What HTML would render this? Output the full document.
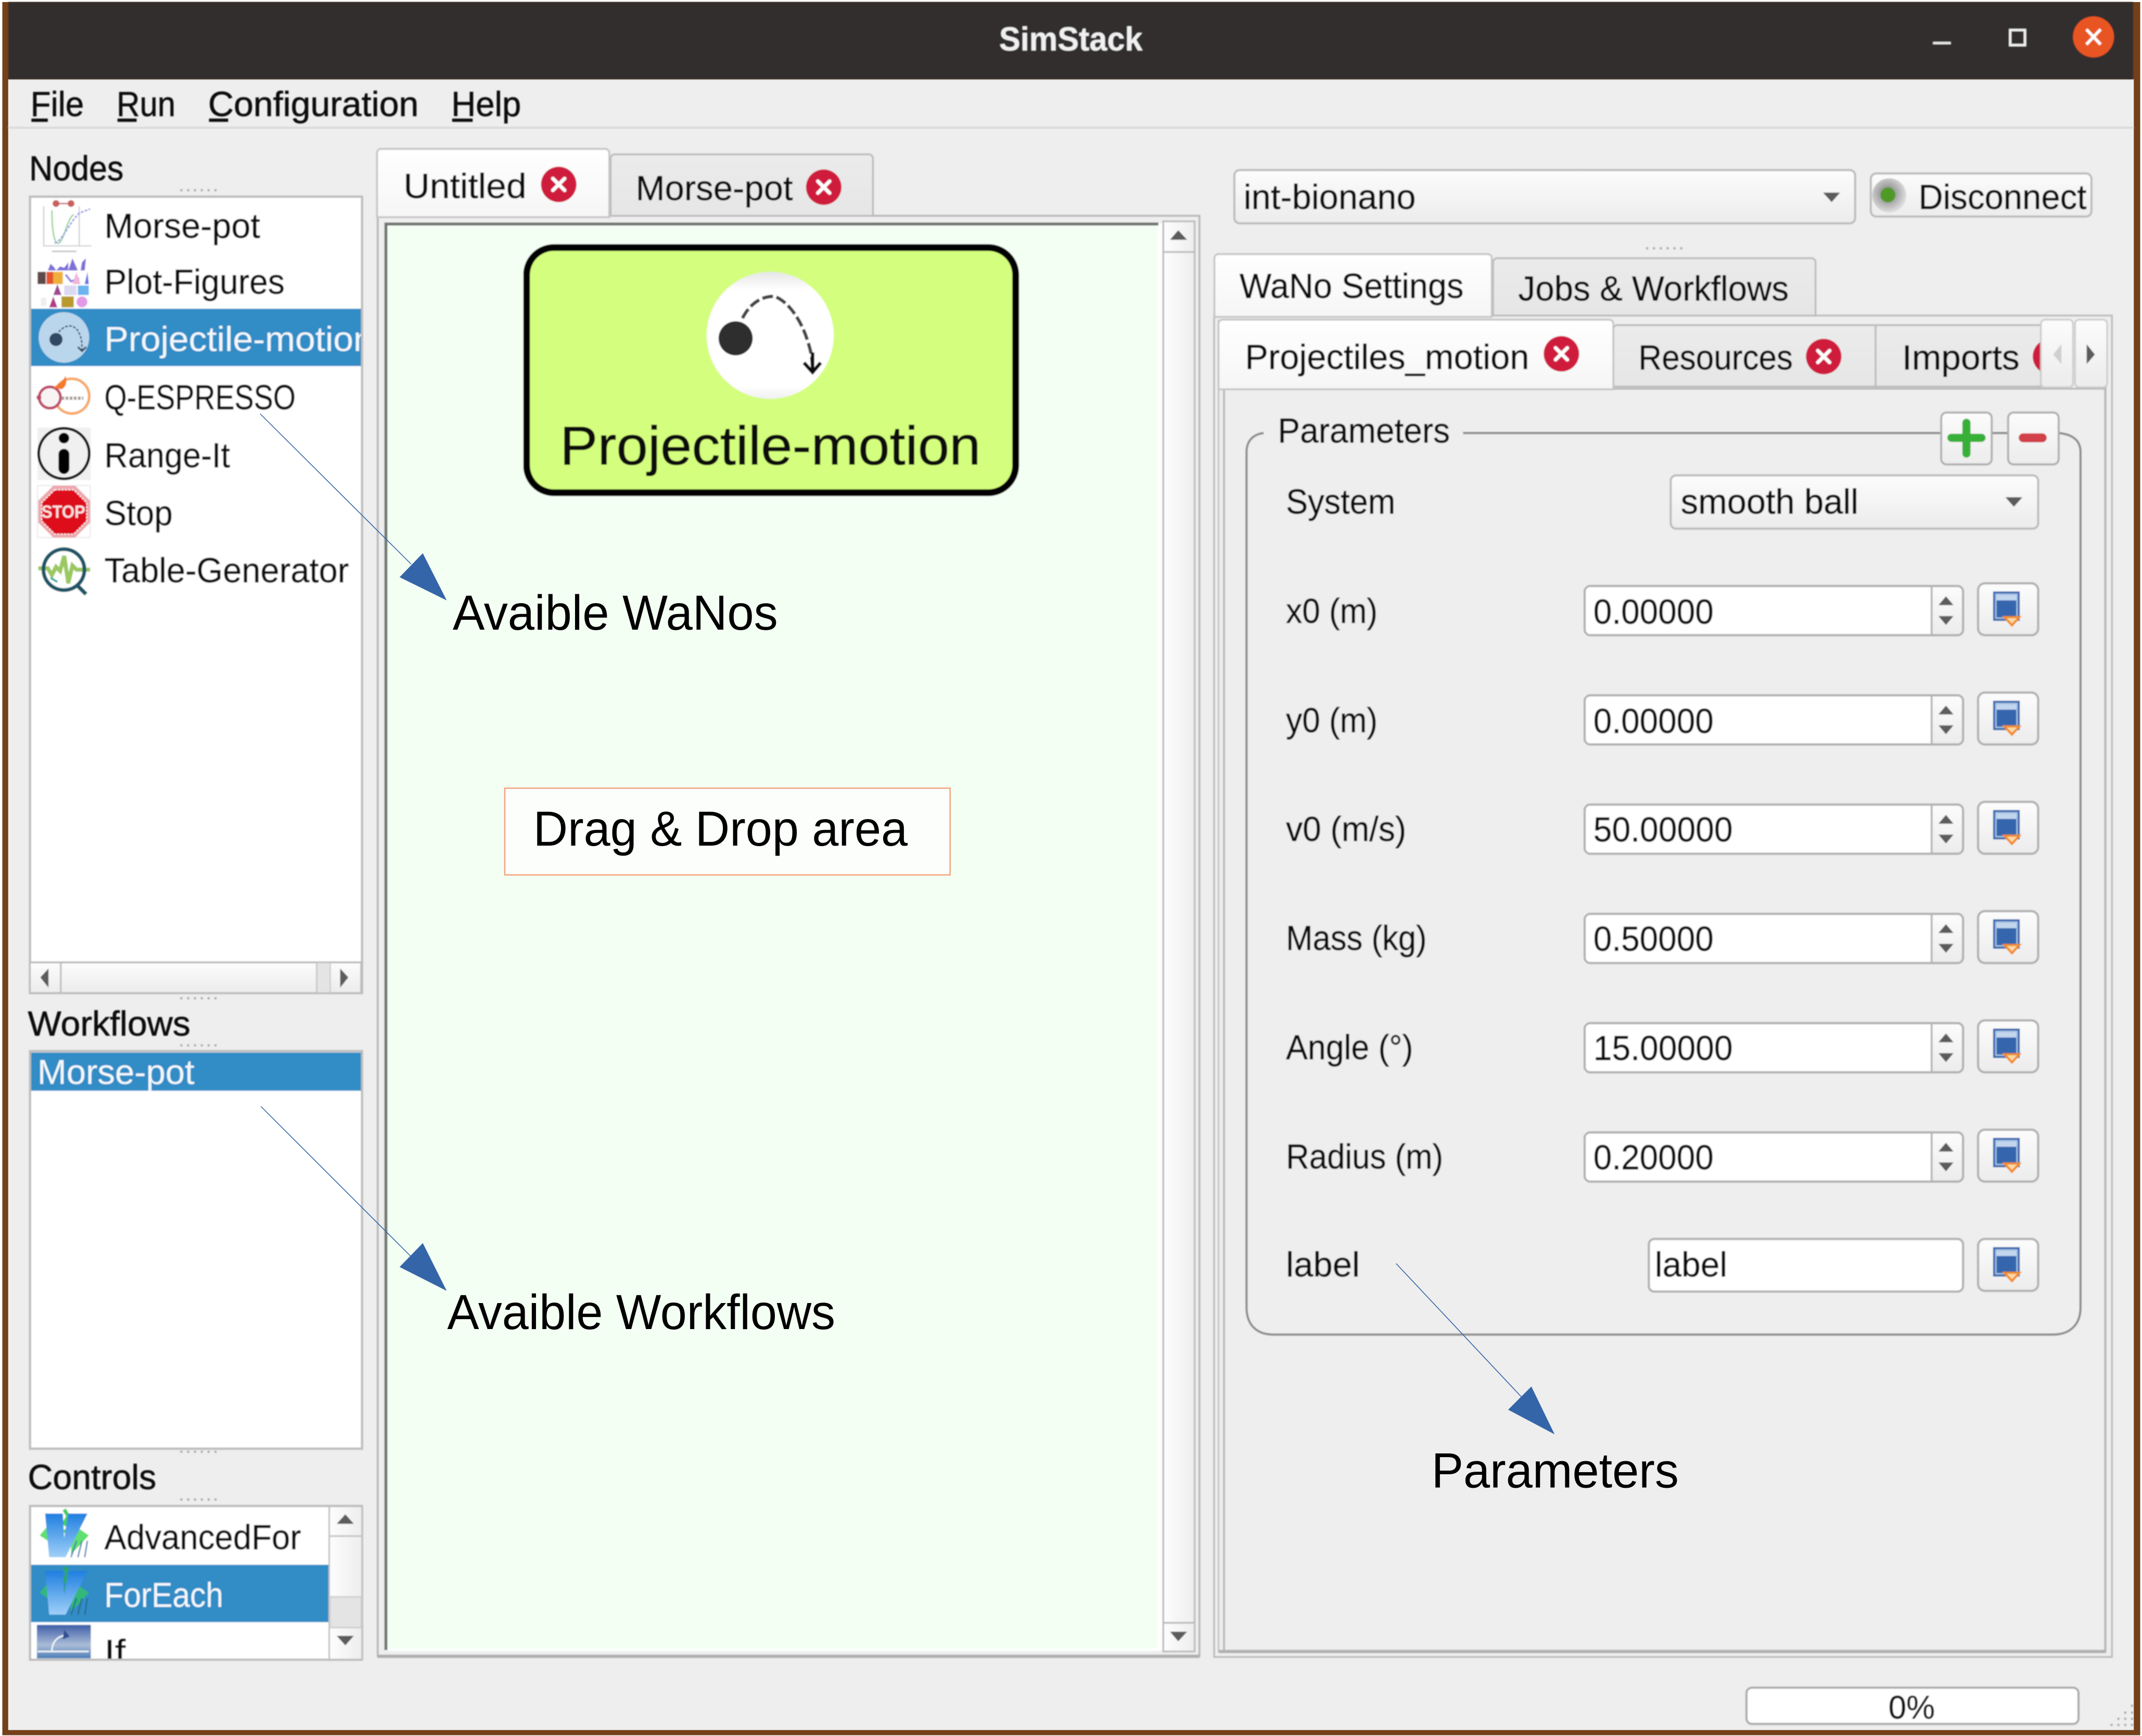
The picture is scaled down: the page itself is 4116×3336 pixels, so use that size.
<!DOCTYPE html>
<html><head><meta charset="utf-8"><title>SimStack</title>
<style>
html,body{margin:0;padding:0;background:#fff;width:4116px;height:3336px;overflow:hidden}
svg{display:block}
text{font-family:"Liberation Sans",sans-serif;fill:#0a0a0a;font-size:25.5px;stroke:#0a0a0a;stroke-width:.28px;transform:translateX(-.6px)}
.w{fill:#f2f7fb;stroke:none}
.a{font-size:36px;fill:#000;stroke:none}
</style></head><body>
<svg xmlns="http://www.w3.org/2000/svg" width="4116" height="3336" viewBox="0 0 1568 1270.857">
<defs>
<filter id="soft" filterUnits="userSpaceOnUse" x="0" y="0" width="1568" height="1271"><feGaussianBlur stdDeviation="0.45"/></filter>
<linearGradient id="btn" x1="0" y1="0" x2="0" y2="1"><stop offset="0" stop-color="#fcfcfc"/><stop offset="1" stop-color="#ececec"/></linearGradient>
<linearGradient id="hb" x1="0" y1="0" x2="1" y2="0"><stop offset="0" stop-color="#fdfdfd"/><stop offset="1" stop-color="#eeeeee"/></linearGradient>
<linearGradient id="ta" x1="0" y1="0" x2="0" y2="1"><stop offset="0" stop-color="#ffffff"/><stop offset="1" stop-color="#f6f6f6"/></linearGradient>
<linearGradient id="ti" x1="0" y1="0" x2="0" y2="1"><stop offset="0" stop-color="#ebebeb"/><stop offset="1" stop-color="#e6e6e6"/></linearGradient>
<linearGradient id="vi" x1="0" y1="0" x2="0" y2="1"><stop offset="0" stop-color="#1f7fe0"/><stop offset="1" stop-color="#9fd0f8"/></linearGradient>
<linearGradient id="ifg" x1="0" y1="0" x2="0" y2="1"><stop offset="0" stop-color="#3f5ea8"/><stop offset=".6" stop-color="#a9bcd6"/><stop offset="1" stop-color="#4f7fb8"/></linearGradient>
<linearGradient id="ballg" x1="0" y1="0" x2="0" y2="1"><stop offset="0" stop-color="#e6e6e6"/><stop offset=".14" stop-color="#ffffff"/><stop offset=".9" stop-color="#ffffff"/><stop offset="1" stop-color="#f0f0f0"/></linearGradient>
<radialGradient id="led" cx=".45" cy=".45" r=".55"><stop offset=".35" stop-color="#9a9a9a"/><stop offset="1" stop-color="#dedede"/></radialGradient>
<symbol id="xc" overflow="visible"><circle cx="0" cy="0" r="13" fill="#cf1a3c"/><path d="M-4.300-4.300 4.300 4.300M4.300-4.300-4.300 4.300" stroke="#fff" stroke-width="2.600" stroke-linecap="round"/></symbol>
<symbol id="spinb" overflow="visible">
<path d="M254 0H273a4 4 0 0 1 4 4V32a4 4 0 0 1-4 4H254Z" fill="url(#btn)"/>
<rect x="0" y="0" width="277" height="36" rx="4" fill="none" stroke="#b0b0b0" stroke-width="1.600"/>
<path d="M254 0V36" stroke="#b4b4b4" stroke-width="1.400"/>
<path d="M264.500 7.500 270 14H259ZM259 22H270L264.500 28.500Z" fill="#5c5c5c"/>
</symbol>
<symbol id="fbtn" overflow="visible">
<rect x="0" y="0" width="44" height="38" rx="5" fill="url(#btn)" stroke="#b0b0b0" stroke-width="1.600"/>
<rect x="11" y="6" width="19.500" height="21.500" fill="#3566ad"/>
<rect x="13" y="8" width="15.500" height="17.500" fill="none" stroke="#a9c4e4" stroke-width="1"/>
<rect x="13.500" y="8.500" width="14.500" height="4" fill="#c2d6ee"/>
<path d="M17.500 24H32L24.800 32Z" fill="#f28a1e"/><path d="M21 25.500H28.500L24.800 29.500Z" fill="#fbd9a8"/>
</symbol>
</defs>

<rect width="1568" height="1271" fill="#fff"/>
<rect x="1.700" y="1.500" width="1565" height="1268.800" fill="#74401a"/>
<rect x="6" y="58" width="1556" height="1208.500" fill="#eeeeee"/>

<g filter="url(#soft)">
<!-- title bar -->
<rect x="6" y="1.500" width="1555.500" height="56.500" fill="#302e2e"/>
<text x="732" y="37" font-weight="bold" textLength="105" lengthAdjust="spacingAndGlyphs" style="fill:#f0f0f0;stroke:none;font-size:24.500px">SimStack</text>
<path d="M1415 31.500H1428" stroke="#e6e6e6" stroke-width="1.800"/>
<rect x="1471.500" y="22" width="10.800" height="11" fill="none" stroke="#f0f0f0" stroke-width="1.800"/>
<circle cx="1532.500" cy="27" r="15" fill="#e95420"/>
<path d="M1527.300 21.500 1537.700 32.500M1537.700 21.500 1527.300 32.500" stroke="#fff" stroke-width="2.200"/>

<!-- menu -->
<text x="23" y="85" textLength="39" lengthAdjust="spacingAndGlyphs">File</text>
<text x="86" y="85" textLength="43" lengthAdjust="spacingAndGlyphs">Run</text>
<text x="153" y="85" textLength="154" lengthAdjust="spacingAndGlyphs">Configuration</text>
<text x="331" y="85" textLength="51" lengthAdjust="spacingAndGlyphs">Help</text>
<path d="M23 88H35M86 88H100M153 88H167M331 88H346" stroke="#111" stroke-width="2.400"/>
<path d="M6 93.500H1562" stroke="#d6d6d6" stroke-width="1.200"/>

<!-- grips -->
<g fill="#a8a8a8">
<path d="M132 138.500h1.500v1.500h-1.500zM137 138.500h1.500v1.500h-1.500zM142 138.500h1.500v1.500h-1.500zM147 138.500h1.500v1.500h-1.500zM152 138.500h1.500v1.500h-1.500zM157 138.500h1.500v1.500h-1.500z"/>
<path d="M132 730h1.500v1.500h-1.500zM137 730h1.500v1.500h-1.500zM142 730h1.500v1.500h-1.500zM147 730h1.500v1.500h-1.500zM152 730h1.500v1.500h-1.500zM157 730h1.500v1.500h-1.500z"/>
<path d="M132 764.500h1.500v1.500h-1.500zM137 764.500h1.500v1.500h-1.500zM142 764.500h1.500v1.500h-1.500zM147 764.500h1.500v1.500h-1.500zM152 764.500h1.500v1.500h-1.500zM157 764.500h1.500v1.500h-1.500z"/>
<path d="M132 1062h1.500v1.500h-1.500zM137 1062h1.500v1.500h-1.500zM142 1062h1.500v1.500h-1.500zM147 1062h1.500v1.500h-1.500zM152 1062h1.500v1.500h-1.500zM157 1062h1.500v1.500h-1.500z"/>
<path d="M132 1097h1.500v1.500h-1.500zM137 1097h1.500v1.500h-1.500zM142 1097h1.500v1.500h-1.500zM147 1097h1.500v1.500h-1.500zM152 1097h1.500v1.500h-1.500zM157 1097h1.500v1.500h-1.500z"/>
<path d="M1205 181h1.500v1.500h-1.500zM1210 181h1.500v1.500h-1.500zM1215 181h1.500v1.500h-1.500zM1220 181h1.500v1.500h-1.500zM1225 181h1.500v1.500h-1.500zM1230 181h1.500v1.500h-1.500z"/>
<path d="M1560 1248h1.500v1.500h-1.500zM1555 1253h1.500v1.500h-1.500zM1560 1253h1.500v1.500h-1.500zM1550 1257.500h1.500v1.500h-1.500zM1555 1257.500h1.500v1.500h-1.500zM1560 1257.500h1.500v1.500h-1.500zM1545 1262h1.500v1.500h-1.500zM1550 1262h1.500v1.500h-1.500zM1555 1262h1.500v1.500h-1.500zM1560 1262h1.500v1.500h-1.500z"/>
</g>

<!-- Nodes -->
<text x="22" y="132" textLength="69" lengthAdjust="spacingAndGlyphs">Nodes</text>
<rect x="22" y="144" width="243" height="583" fill="#fff" stroke="#bcbcbc" stroke-width="1.600"/>
<rect x="22.800" y="226" width="241.400" height="42" fill="#308cc6"/>
<text x="77" y="174" textLength="114" lengthAdjust="spacingAndGlyphs">Morse-pot</text>
<text x="77" y="215" textLength="132" lengthAdjust="spacingAndGlyphs">Plot-Figures</text>
<svg x="22.800" y="226" width="241.400" height="42" viewBox="22.800 226 241.400 42"><text x="77" y="257" textLength="197" lengthAdjust="spacingAndGlyphs" class="w">Projectile-motion</text></svg>
<text x="77" y="299.700" textLength="140" lengthAdjust="spacingAndGlyphs">Q-ESPRESSO</text>
<text x="77" y="342" textLength="92" lengthAdjust="spacingAndGlyphs">Range-It</text>
<text x="77" y="384.300" textLength="50" lengthAdjust="spacingAndGlyphs">Stop</text>
<text x="77" y="426.300" textLength="179" lengthAdjust="spacingAndGlyphs">Table-Generator</text>

<!-- morse icon -->
<path d="M32 151V180H67M58 151V180" fill="none" stroke="#c8c8c8" stroke-width=".8"/>
<circle cx="41" cy="149" r="2.500" fill="#c96060"/><circle cx="52" cy="149" r="2.500" fill="#c96060"/><path d="M41 149H52" stroke="#c96060"/>
<path d="M38 154C38 170 40 179 43 178C47 176 49 160 54 157" fill="none" stroke="#8fd08f" stroke-width="1"/>
<path d="M40 178C46 176 50 164 58 156L66 153" fill="none" stroke="#9a9ae8" stroke-width="1.200" stroke-dasharray="2 1"/>
<path d="M38 184H56" stroke="#bbb" stroke-width="1"/>

<!-- plot icon -->
<g>
<rect x="27.500" y="187" width="39" height="38" fill="#fff"/>
<path d="M35 198 37 193 40 196 41 198ZM41 198 44 195 47 196 50 192 50 198ZM50 198 53 189 57 198ZM59 198 60 192 63 189 62 198Z" fill="#7f70d8"/>
<rect x="27.500" y="199" width="6" height="9" fill="#5e4a4a"/><rect x="34" y="199" width="5" height="9" fill="#e6532e"/><rect x="39" y="199" width="7" height="9" fill="#efb03a"/>
<path d="M48 201 52 206 58 204" fill="none" stroke="#8e80e0" stroke-width="1.500"/><path d="M53 208 56 199 59 208Z" fill="#f2b6d8"/><path d="M62 208 64 199 65 208Z" fill="#6670e8"/>
<path d="M39 216 42 208 45 216Z" fill="#a04a92"/><rect x="47" y="209" width="9" height="7" fill="#dcd8f2"/><rect x="57" y="209" width="8" height="7" fill="#6cb4ef"/>
<path d="M36 225 39 217 42 225Z" fill="#b23a86"/><rect x="45" y="217" width="9" height="8" fill="#b89a2e"/><circle cx="60" cy="221" r="4" fill="#e29ae6"/><rect x="30" y="218" width="4" height="6" fill="#eee"/>
</g>

<!-- projectile small -->
<circle cx="46.800" cy="247" r="18.500" fill="#bad6ec"/>
<circle cx="41" cy="248.500" r="4.800" fill="#314a64"/>
<path d="M43 243C48 237 55 237 58 244C60 248 60 252 60 256" fill="none" stroke="#2e465e" stroke-width="1" stroke-dasharray="2 1"/>
<path d="M57 254 60 257 63 254" fill="none" stroke="#2e465e" stroke-width="1.300"/>

<!-- QE -->
<circle cx="52.600" cy="290" r="12.700" fill="#fff" stroke="#f8a868" stroke-width="2"/>
<circle cx="36.500" cy="291" r="7.800" fill="#f8f4f4" stroke="#c04868" stroke-width="2"/>
<path d="M39 284 C42 281 46 280 48 275 C49 279 49 283 45 285Z" fill="#f47a2a"/>
<path d="M45 291.500H61" stroke="#a89c98" stroke-width="2.400" stroke-dasharray="2 1"/>
<circle cx="28.500" cy="291" r="1.800" fill="#c04868"/>

<!-- info -->
<rect x="27.500" y="313" width="39" height="38.500" fill="#f0f0f0"/>
<circle cx="46.800" cy="332" r="18.500" fill="none" stroke="#111" stroke-width="2"/>
<circle cx="46.800" cy="320.700" r="3.900" fill="#000"/>
<rect x="42.800" y="328.500" width="8" height="18.500" rx="4" fill="#000"/>

<!-- stop -->
<rect x="27.500" y="355.500" width="38.500" height="38" fill="#fff" stroke="#e2e2e2" stroke-width=".6"/>
<path d="M39 355.500H55L66 366.500V382.500L55 393.500H39L28 382.500V366.500Z" fill="#eda8ae"/>
<path d="M40 358.500H54L63.500 368V381.500L54 391H40L30.500 381.500V368Z" fill="#dd0a1e" stroke="#fff" stroke-width=".8" stroke-dasharray="1.500 1"/>
<text x="31" y="379" textLength="32" lengthAdjust="spacingAndGlyphs" font-weight="bold" style="fill:#fbe0e0;stroke:none;font-size:13px">STOP</text>

<!-- table gen -->
<path d="M28 416H35L38 421 41 415 44 418 47 407 50 427 53 414 56 417H66" fill="none" stroke="#9ac860" stroke-width="3"/>
<circle cx="46.800" cy="417" r="15" fill="none" stroke="#1a5668" stroke-width="2.800"/>
<path d="M57 429 63 435" stroke="#1a5668" stroke-width="3"/>
<path d="M37 423 42 426" stroke="#28a8a0" stroke-width="1.500"/>

<!-- h scrollbar -->
<rect x="21.800" y="704.500" width="242.600" height="22.500" fill="url(#btn)" stroke="#bcbcbc" stroke-width="1.400"/>
<path d="M44.500 704.500V727M241.500 704.500V727" stroke="#bcbcbc" stroke-width="1.200"/>
<rect x="231.800" y="705" width="9.700" height="21.500" fill="#e4e4e4"/>
<path d="M231.800 705V726.500" stroke="#c4c4c4" stroke-width="1"/>
<path d="M35.500 709 29.500 715.500 35.500 723ZM249 709 255 715.500 249 723Z" fill="#5c5c5c"/>

<!-- Workflows -->
<text x="21" y="758" textLength="119" lengthAdjust="spacingAndGlyphs">Workflows</text>
<rect x="22" y="769.500" width="243" height="291" fill="#fff" stroke="#bcbcbc" stroke-width="1.600"/>
<rect x="22.800" y="770.500" width="241.400" height="28" fill="#308cc6"/>
<text x="28" y="793.500" textLength="115" lengthAdjust="spacingAndGlyphs" class="w">Morse-pot</text>

<!-- Controls -->
<text x="21" y="1090" textLength="94" lengthAdjust="spacingAndGlyphs">Controls</text>
<rect x="22" y="1102.500" width="243" height="112.500" fill="#fff" stroke="#bcbcbc" stroke-width="1.600"/>
<rect x="22.800" y="1145.500" width="218" height="42" fill="#308cc6"/>
<path d="M29 1124 35 1117 38 1130ZM52 1115 65 1124 52 1138Z" fill="#5fe070"/>
<path d="M47 1105 50 1110 47 1115 51 1118 47 1122" fill="none" stroke="#44cc66" stroke-width="2.800"/>
<path d="M33 1108H46L47 1126 50 1108H64L48 1140H36Z" fill="url(#vi)"/>
<path d="M52 1140 56 1128M57 1140 60 1128M62 1140 64 1128" stroke="#4a7ab0" stroke-width="1"/>
<path d="M29 1166 35 1159 38 1172ZM52 1157 65 1166 52 1180Z" fill="#30b878"/>
<path d="M47 1147 50 1152 47 1157 51 1160 47 1164" fill="none" stroke="#2aa868" stroke-width="2.800"/>
<path d="M33 1150H46L47 1168 50 1150H64L48 1182H36Z" fill="url(#vi)"/>
<path d="M52 1182 56 1170M57 1182 60 1170M62 1182 64 1170" stroke="#2a6a90" stroke-width="1"/>
<text x="77" y="1134" textLength="144" lengthAdjust="spacingAndGlyphs">AdvancedFor</text>
<text x="77" y="1176.300" textLength="87" lengthAdjust="spacingAndGlyphs" class="w">ForEach</text>
<rect x="27" y="1189.500" width="39.500" height="24.500" fill="url(#ifg)"/>
<path d="M27.500 1209H65M38 1209C38 1202 42 1198 48 1197" fill="none" stroke="#eef3f8" stroke-width="1.200"/><path d="M47 1193 51 1198 46 1200Z" fill="#2f4f90"/>
<svg x="23" y="1187.500" width="217" height="26.800" viewBox="23 1187.500 217 26.800"><text x="77" y="1218" textLength="15.500" lengthAdjust="spacingAndGlyphs">If</text></svg>
<rect x="241" y="1103.500" width="23.500" height="110.800" fill="url(#hb)"/>
<path d="M241 1103V1214.500" stroke="#c2c2c2" stroke-width="1.200"/>
<path d="M241 1124.500H264.500" stroke="#c2c2c2" stroke-width="1.200"/>
<rect x="241.500" y="1169" width="23" height="22.500" fill="#e4e4e4" stroke="#cccccc" stroke-width="1"/>
<path d="M252.800 1108.500 259 1115.500H246.500ZM246.500 1197.500H259L252.800 1204.500Z" fill="#5c5c5c"/>

<!-- center pane -->
<rect x="276.500" y="158" width="601.500" height="1054.500" fill="#eeeeee" stroke="#b8b8b8" stroke-width="1.400"/>
<path d="M276.500 1212.500H878" stroke="#b0b0b0" stroke-width="2.400"/>
<rect x="282" y="163.500" width="569.500" height="1045" fill="#ffffff"/>
<rect x="283.500" y="165.500" width="564" height="1041.500" fill="#f4fff4"/>
<path d="M282.500 1208V164H848" fill="none" stroke="#70766f" stroke-width="2.200"/>
<rect x="851.500" y="162" width="23" height="1047" fill="url(#hb)" stroke="#bcbcbc" stroke-width="1.300"/>
<path d="M851.500 184.500H874.500M851.500 1188H874.500" stroke="#bcbcbc" stroke-width="1.300"/>
<path d="M862.500 168.500 869 175.500H856.500ZM856.500 1194.500H869L862.500 1201.500Z" fill="#5c5c5c"/>

<!-- center tabs -->
<path d="M447 158V116a3 3 0 0 1 3-3H636a3 3 0 0 1 3 3V158Z" fill="url(#ti)" stroke="#bcbcbc" stroke-width="1.300"/>
<path d="M276 159V112a3 3 0 0 1 3-3H443a3 3 0 0 1 3 3V159Z" fill="url(#ta)" stroke="#c4c4c4" stroke-width="1.300"/>
<text x="296" y="145" textLength="90" lengthAdjust="spacingAndGlyphs">Untitled</text>
<use href="#xc" x="409" y="135"/>
<text x="466" y="146.500" textLength="115" lengthAdjust="spacingAndGlyphs">Morse-pot</text>
<use href="#xc" x="603" y="137"/>

<!-- wano -->
<rect x="385.500" y="181.200" width="358" height="179.500" rx="20" ry="20" fill="#d4fe7e" stroke="#000" stroke-width="5"/>
<circle cx="563.800" cy="245.500" r="46.500" fill="url(#ballg)"/>
<circle cx="538.500" cy="247.700" r="12.500" fill="#2d2d2d"/>
<path d="M543.500 233C549 222 558 216.500 567 217C578 221 587 236 591 249C594 258 594.500 262 594.800 271" fill="none" stroke="#444" stroke-width="2.500" stroke-dasharray="8 2.500"/>
<path d="M594.800 258V272M588.500 265.500 594.800 272.500 600.800 265.500" fill="none" stroke="#111" stroke-width="2.600"/>
<text x="410.500" y="340" textLength="308" lengthAdjust="spacingAndGlyphs" style="font-size:40px;stroke-width:.4px">Projectile-motion</text>

<!-- top right -->
<rect x="903.600" y="124.500" width="454.400" height="39" rx="4" fill="url(#btn)" stroke="#bcbcbc" stroke-width="1.500"/>
<text x="911" y="153" textLength="126" lengthAdjust="spacingAndGlyphs">int-bionano</text>
<path d="M1334.500 141H1347L1340.800 148Z" fill="#5c5c5c"/>
<rect x="1369.500" y="127" width="161.500" height="31.500" rx="4" fill="url(#btn)" stroke="#bcbcbc" stroke-width="1.500"/>
<circle cx="1383" cy="143" r="12.500" fill="url(#led)"/><circle cx="1382" cy="142.700" r="5.500" fill="#4f9a26"/>
<text x="1405" y="153" textLength="123" lengthAdjust="spacingAndGlyphs">Disconnect</text>

<!-- right panes -->
<rect x="888.800" y="231" width="657.200" height="982" fill="#eeeeee" stroke="#bcbcbc" stroke-width="1.300"/>
<path d="M892 1209V234M892 1209H1541.500V234" fill="none" stroke="#c4c4c4" stroke-width="1.200"/>
<rect x="896" y="284.500" width="645" height="924" fill="#eeeeee" stroke="#b8b8b8" stroke-width="1.400"/>
<path d="M892 1209H1541.500" stroke="#b0b0b0" stroke-width="2.400"/>
<path d="M1093 231V192a3 3 0 0 1 3-3H1326a3 3 0 0 1 3 3V231Z" fill="url(#ti)" stroke="#bcbcbc" stroke-width="1.300"/>
<path d="M889 232V189a3 3 0 0 1 3-3H1089a3 3 0 0 1 3 3V232Z" fill="url(#ta)" stroke="#c4c4c4" stroke-width="1.300"/>
<text x="908" y="218" textLength="164" lengthAdjust="spacingAndGlyphs">WaNo Settings</text>
<text x="1112" y="220" textLength="198" lengthAdjust="spacingAndGlyphs">Jobs &amp; Workflows</text>

<path d="M1181 283V241a3 3 0 0 1 3-3H1373V283Z" fill="url(#ti)" stroke="#bcbcbc" stroke-width="1.300"/>
<path d="M1373 283V238H1494V283Z" fill="url(#ti)" stroke="#bcbcbc" stroke-width="1.300"/>
<path d="M892 285V237a3 3 0 0 1 3-3H1178a3 3 0 0 1 3 3V285Z" fill="url(#ta)" stroke="#c4c4c4" stroke-width="1.300"/>
<text x="912" y="270" textLength="208" lengthAdjust="spacingAndGlyphs">Projectiles_motion</text>
<use href="#xc" x="1143" y="259"/>
<text x="1200" y="270.500" textLength="113" lengthAdjust="spacingAndGlyphs">Resources</text>
<use href="#xc" x="1335" y="261"/>
<text x="1393" y="270.500" textLength="86" lengthAdjust="spacingAndGlyphs">Imports</text>
<circle cx="1501" cy="261" r="13" fill="#cf1a3c"/>
<rect x="1494" y="234" width="23.500" height="49.500" rx="3" fill="url(#btn)" stroke="#cccccc" stroke-width="1.200"/>
<rect x="1519" y="234" width="23.500" height="49.500" rx="3" fill="url(#btn)" stroke="#cccccc" stroke-width="1.200"/>
<path d="M1509 252 1503 259.500 1509 266.500Z" fill="#cfcfcf"/>
<path d="M1527.500 252 1533.500 259.500 1527.500 266.500Z" fill="#5c5c5c"/>

<!-- group box -->
<path d="M925 317C917 318 912.500 323 912.500 331V957C912.500 970 920 977 932 977H1503C1515 977 1523 970 1523 957V331C1523 323 1518 318 1507 317M1071 317H1421M1458 317H1470" fill="none" stroke="#8c8c8c" stroke-width="1.600"/>
<text x="936" y="324" textLength="126" lengthAdjust="spacingAndGlyphs">Parameters</text>
<rect x="1421" y="302" width="37" height="38" rx="4" fill="url(#btn)" stroke="#b0b0b0" stroke-width="1.500"/>
<rect x="1470" y="302" width="37" height="38" rx="4" fill="url(#btn)" stroke="#b0b0b0" stroke-width="1.500"/>
<path d="M1439.500 309.500V332M1428.500 320.500H1450.500" stroke="#38b038" stroke-width="6" stroke-linecap="round"/>
<path d="M1481 320.500H1495" stroke="#d2404a" stroke-width="6.500" stroke-linecap="round"/>

<text x="942" y="376" textLength="80" lengthAdjust="spacingAndGlyphs">System</text>
<rect x="1223" y="348" width="269" height="39" rx="4" fill="url(#btn)" stroke="#bcbcbc" stroke-width="1.500"/>
<text x="1231" y="376" textLength="130" lengthAdjust="spacingAndGlyphs">smooth ball</text>
<path d="M1468 364H1480.500L1474.200 371Z" fill="#5c5c5c"/>

<g>
<text x="942" y="456" textLength="67" lengthAdjust="spacingAndGlyphs">x0 (m)</text>
<rect x="1160" y="429" width="254" height="36" fill="#fff"/><use href="#spinb" x="1160" y="429"/>
<text x="1167" y="456.500" textLength="88" lengthAdjust="spacingAndGlyphs">0.00000</text>
<use href="#fbtn" x="1448" y="427"/>

<text x="942" y="536" textLength="67" lengthAdjust="spacingAndGlyphs">y0 (m)</text>
<rect x="1160" y="509" width="254" height="36" fill="#fff"/><use href="#spinb" x="1160" y="509"/>
<text x="1167" y="536.500" textLength="88" lengthAdjust="spacingAndGlyphs">0.00000</text>
<use href="#fbtn" x="1448" y="507"/>

<text x="942" y="615.700" textLength="88" lengthAdjust="spacingAndGlyphs">v0 (m/s)</text>
<rect x="1160" y="589" width="254" height="36" fill="#fff"/><use href="#spinb" x="1160" y="589"/>
<text x="1167" y="616" textLength="102" lengthAdjust="spacingAndGlyphs">50.00000</text>
<use href="#fbtn" x="1448" y="587"/>

<text x="942" y="695.500" textLength="103" lengthAdjust="spacingAndGlyphs">Mass (kg)</text>
<rect x="1160" y="669" width="254" height="36" fill="#fff"/><use href="#spinb" x="1160" y="669"/>
<text x="1167" y="696" textLength="88" lengthAdjust="spacingAndGlyphs">0.50000</text>
<use href="#fbtn" x="1448" y="667"/>

<text x="942" y="775.500" textLength="93" lengthAdjust="spacingAndGlyphs">Angle (°)</text>
<rect x="1160" y="749" width="254" height="36" fill="#fff"/><use href="#spinb" x="1160" y="749"/>
<text x="1167" y="776" textLength="102" lengthAdjust="spacingAndGlyphs">15.00000</text>
<use href="#fbtn" x="1448" y="747"/>

<text x="942" y="855.500" textLength="115" lengthAdjust="spacingAndGlyphs">Radius (m)</text>
<rect x="1160" y="829" width="254" height="36" fill="#fff"/><use href="#spinb" x="1160" y="829"/>
<text x="1167" y="856" textLength="88" lengthAdjust="spacingAndGlyphs">0.20000</text>
<use href="#fbtn" x="1448" y="827"/>

<text x="942" y="934.500" textLength="54" lengthAdjust="spacingAndGlyphs">label</text>
<rect x="1207" y="907" width="230" height="38.500" rx="4" fill="#fff" stroke="#b0b0b0" stroke-width="1.600"/>
<text x="1212" y="934.500" textLength="53" lengthAdjust="spacingAndGlyphs">label</text>
<use href="#fbtn" x="1448" y="907"/>
</g>

<!-- progress -->
<rect x="1278.500" y="1235.500" width="243" height="26.500" rx="4" fill="#fff" stroke="#aaaaaa" stroke-width="1.500"/>
<text x="1383" y="1258" textLength="34" lengthAdjust="spacingAndGlyphs" style="font-size:24px">0%</text>
</g>

<!-- annotations -->
<g>
<rect x="369.500" y="577" width="326" height="63.500" fill="#fbfefb" stroke="#f5a882" stroke-width="1"/>
<text x="391" y="619" class="a" textLength="274" lengthAdjust="spacingAndGlyphs">Drag &amp; Drop area</text>
<text x="332" y="461" class="a" textLength="238" lengthAdjust="spacingAndGlyphs">Avaible WaNos</text>
<text x="328" y="973" class="a" textLength="284" lengthAdjust="spacingAndGlyphs">Avaible Workflows</text>
<text x="1048.500" y="1089" class="a" textLength="181" lengthAdjust="spacingAndGlyphs">Parameters</text>
<path d="M190.500 303 301 413" stroke="#3465a8" stroke-width=".6" fill="none"/>
<path d="M309.500 405 292.500 422.500 327 439.500Z" fill="#3465a8"/>
<path d="M191 810 301 920" stroke="#3465a8" stroke-width=".6" fill="none"/>
<path d="M309.500 910 292.500 927.500 327 945Z" fill="#3465a8"/>
<path d="M1022 925 1115 1024" stroke="#3465a8" stroke-width=".6" fill="none"/>
<path d="M1121 1015 1104 1032 1138 1050Z" fill="#3465a8"/>
</g>
</svg>
</body></html>
